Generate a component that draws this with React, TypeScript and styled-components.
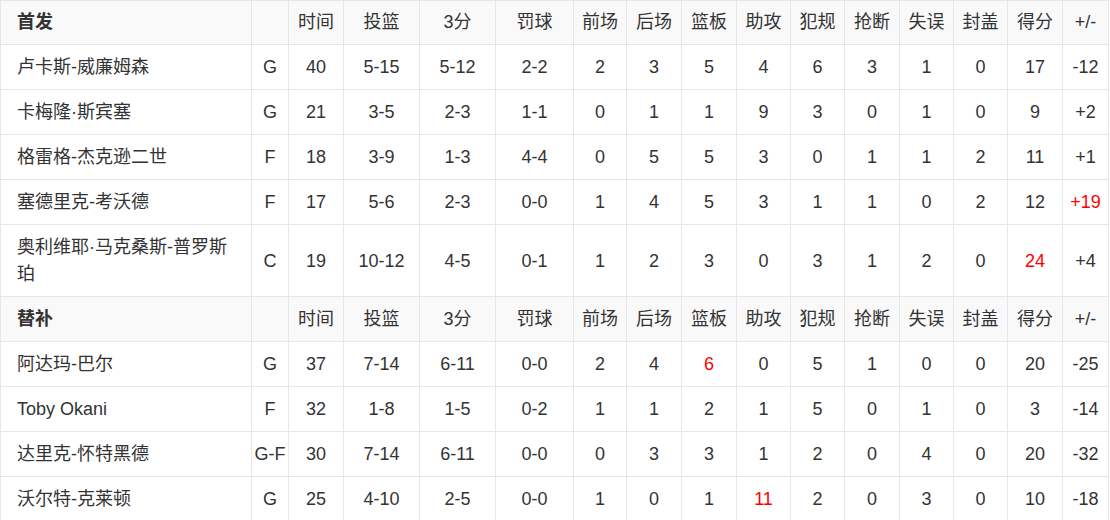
import styled, { createGlobalStyle } from 'styled-components';

const GlobalStyle = createGlobalStyle`
  body {
    margin: 0;
    background: #fff;
    font-family: "Liberation Sans", "Noto Sans CJK SC", sans-serif;
    color: #333;
  }
`;

const Table = styled.table`
  width: 1109px;
  table-layout: fixed;
  border-collapse: collapse;
  font-size: 18px;
  line-height: 27px;

  tr:first-child td {
    padding-top: 8px;
  }
`;

const HeadRow = styled.tr`
  background: #f9f9f9;
`;

const Cell = styled.td<{ $name?: boolean; $bold?: boolean; $red?: boolean }>`
  border: 1px solid #e6e6e6;
  padding: 9px ${p => (p.$name ? '16px' : '2px')} 8px;
  text-align: ${p => (p.$name ? 'left' : 'center')};
  font-weight: ${p => (p.$bold ? 'bold' : 'normal')};
  color: ${p => (p.$red ? '#ff0000' : '#333')};
  white-space: ${p => (p.$name ? 'normal' : 'nowrap')};
`;

const widths = [251, 37, 55, 76, 76, 78, 53, 55, 55, 54, 54, 55, 54, 54, 55, 46];
const headers = ['时间', '投篮', '3分', '罚球', '前场', '后场', '篮板', '助攻', '犯规', '抢断', '失误', '封盖', '得分', '+/-'];

type Row = { name: string; pos: string; stats: string[]; red?: number[] };

const starters: Row[] = [
  { name: '卢卡斯-威廉姆森', pos: 'G', stats: ['40', '5-15', '5-12', '2-2', '2', '3', '5', '4', '6', '3', '1', '0', '17', '-12'] },
  { name: '卡梅隆·斯宾塞', pos: 'G', stats: ['21', '3-5', '2-3', '1-1', '0', '1', '1', '9', '3', '0', '1', '0', '9', '+2'] },
  { name: '格雷格-杰克逊二世', pos: 'F', stats: ['18', '3-9', '1-3', '4-4', '0', '5', '5', '3', '0', '1', '1', '2', '11', '+1'] },
  { name: '塞德里克-考沃德', pos: 'F', stats: ['17', '5-6', '2-3', '0-0', '1', '4', '5', '3', '1', '1', '0', '2', '12', '+19'], red: [13] },
  { name: '奥利维耶·马克桑斯-普罗斯珀', pos: 'C', stats: ['19', '10-12', '4-5', '0-1', '1', '2', '3', '0', '3', '1', '2', '0', '24', '+4'], red: [12] },
];

const bench: Row[] = [
  { name: '阿达玛-巴尔', pos: 'G', stats: ['37', '7-14', '6-11', '0-0', '2', '4', '6', '0', '5', '1', '0', '0', '20', '-25'], red: [6] },
  { name: 'Toby Okani', pos: 'F', stats: ['32', '1-8', '1-5', '0-2', '1', '1', '2', '1', '5', '0', '1', '0', '3', '-14'] },
  { name: '达里克-怀特黑德', pos: 'G-F', stats: ['30', '7-14', '6-11', '0-0', '0', '3', '3', '1', '2', '0', '4', '0', '20', '-32'] },
  { name: '沃尔特-克莱顿', pos: 'G', stats: ['25', '4-10', '2-5', '0-0', '1', '0', '1', '11', '2', '0', '3', '0', '10', '-18'], red: [7] },
];

const Section = ({ title, rows }: { title: string; rows: Row[] }) => (
  <>
    <HeadRow>
      <Cell $name $bold>{title}</Cell>
      <Cell />
      {headers.map(h => (
        <Cell key={h}>{h}</Cell>
      ))}
    </HeadRow>
    {rows.map(r => (
      <tr key={r.name}>
        <Cell $name>{r.name}</Cell>
        <Cell>{r.pos}</Cell>
        {r.stats.map((s, i) => (
          <Cell key={i} $red={r.red?.includes(i)}>{s}</Cell>
        ))}
      </tr>
    ))}
  </>
);

const App = () => (
  <>
    <GlobalStyle />
    <Table>
      <colgroup>
        {widths.map((w, i) => (
          <col key={i} style={{ width: w }} />
        ))}
      </colgroup>
      <tbody>
        <Section title="首发" rows={starters} />
        <Section title="替补" rows={bench} />
      </tbody>
    </Table>
  </>
);

export default App;
